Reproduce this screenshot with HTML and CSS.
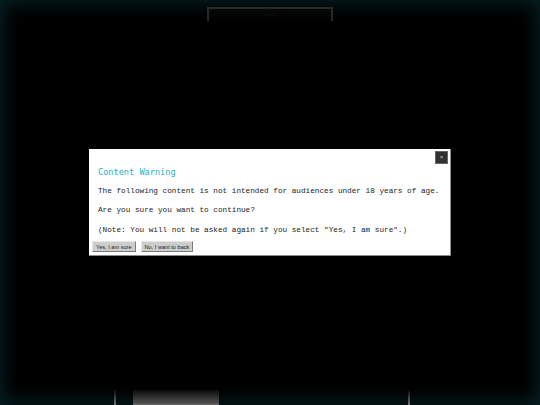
FILE: index.html
```html
<!DOCTYPE html>
<html lang="en">
<head>
  <meta charset="UTF-8">
  <meta name="viewport" content="width=device-width, initial-scale=1.0">
  <title>Content Warning</title>
  <link rel="stylesheet" href="styles.css">
</head>
<body>
  <div class="stage">
    <div class="top-tab"><span class="tab-label">menu</span></div>
    <div class="stage-fill"></div>
    <div class="bottom-bar">
      <span class="rail"></span>
      <span class="bottom-btn"></span>
      <span class="bottom-gap"></span>
      <span class="rail"></span>
    </div>
  </div>

  <!-- age gate overlay -->
  <div class="overlay">
    <div class="dialog">
      <button class="close-btn" aria-label="Close">&times;</button>
      <h2 class="dialog-title">Content Warning</h2>
      <p>The following content is not intended for audiences under 18 years of age.</p>
      <p>Are you sure you want to continue?</p>
      <p>(Note: You will not be asked again if you select "Yes, I am sure".)</p>
      <div class="actions">
        <button class="btn">Yes, I am sure</button>
        <button class="btn">No, I want to back</button>
      </div>
    </div>
  </div>
</body>
</html>
```

FILE: styles.css
```css
* { box-sizing: border-box; margin: 0; padding: 0; }
html, body { height: 100%; }
body {
  background: #000;
  overflow: hidden;
  font-family: "Liberation Mono", "DejaVu Sans Mono", monospace;
}
.stage {
  height: 100%;
  display: flex;
  flex-direction: column;
  box-shadow: inset 0 0 18px 3px rgba(8, 38, 42, 0.9);
}
.top-tab {
  align-self: center;
  width: 126px;
  height: 14px;
  margin-top: 7px;
  border: 2px solid #262829;
  border-bottom: none;
  background: linear-gradient(#070808, #000);
  display: flex;
  justify-content: center;
}
.tab-label {
  font-size: 4px;
  color: #161717;
  margin-top: 4px;
}
.stage-fill { flex: 1; }
.bottom-bar {
  display: flex;
  align-items: flex-end;
  height: 16px;
  padding-left: 114px;
}
.rail {
  width: 2px;
  height: 100%;
  background: linear-gradient(#000, #777);
}
.bottom-btn {
  width: 86px;
  height: 15px;
  margin-left: 17px;
  background: linear-gradient(#0a0a0a, #555);
  border-bottom: 1px solid #666;
}
.bottom-gap { width: 189px; }

.overlay {
  position: fixed;
  inset: 0;
  display: flex;
  align-items: center;
  justify-content: center;
}
.dialog {
  position: relative;
  width: 362px;
  background: #fff;
  border-right: 1px solid #8a8a8a;
  border-bottom: 1px solid #8a8a8a;
  padding: 18px 6px 3px 9px;
  color: #222;
}
.close-btn {
  position: absolute;
  top: 2px;
  right: 2px;
  width: 13px;
  height: 13px;
  background: #333;
  border: 1px solid #666;
  color: #ccc;
  font-size: 6px;
  line-height: 10px;
  cursor: pointer;
}
.dialog-title {
  font-family: "DejaVu Sans Mono", monospace;
  font-weight: normal;
  font-size: 8.6px;
  line-height: 10px;
  color: #1fb0c8;
  margin-bottom: 9px;
}
.dialog p {
  font-size: 7.7px;
  line-height: 10px;
  margin-bottom: 9.5px;
  white-space: nowrap;
}
.actions {
  display: flex;
  gap: 5px;
  margin-left: -6px;
  margin-top: -3px;
}
.btn {
  font-family: "Liberation Sans", Arial, sans-serif;
  font-size: 5.6px;
  height: 11px;
  padding: 0 3px;
  background: #cdcdcd;
  color: #222;
  border: 1px solid #7a7a7a;
  border-top-color: #e8e8e8;
  border-left-color: #e8e8e8;
  cursor: pointer;
}
```
